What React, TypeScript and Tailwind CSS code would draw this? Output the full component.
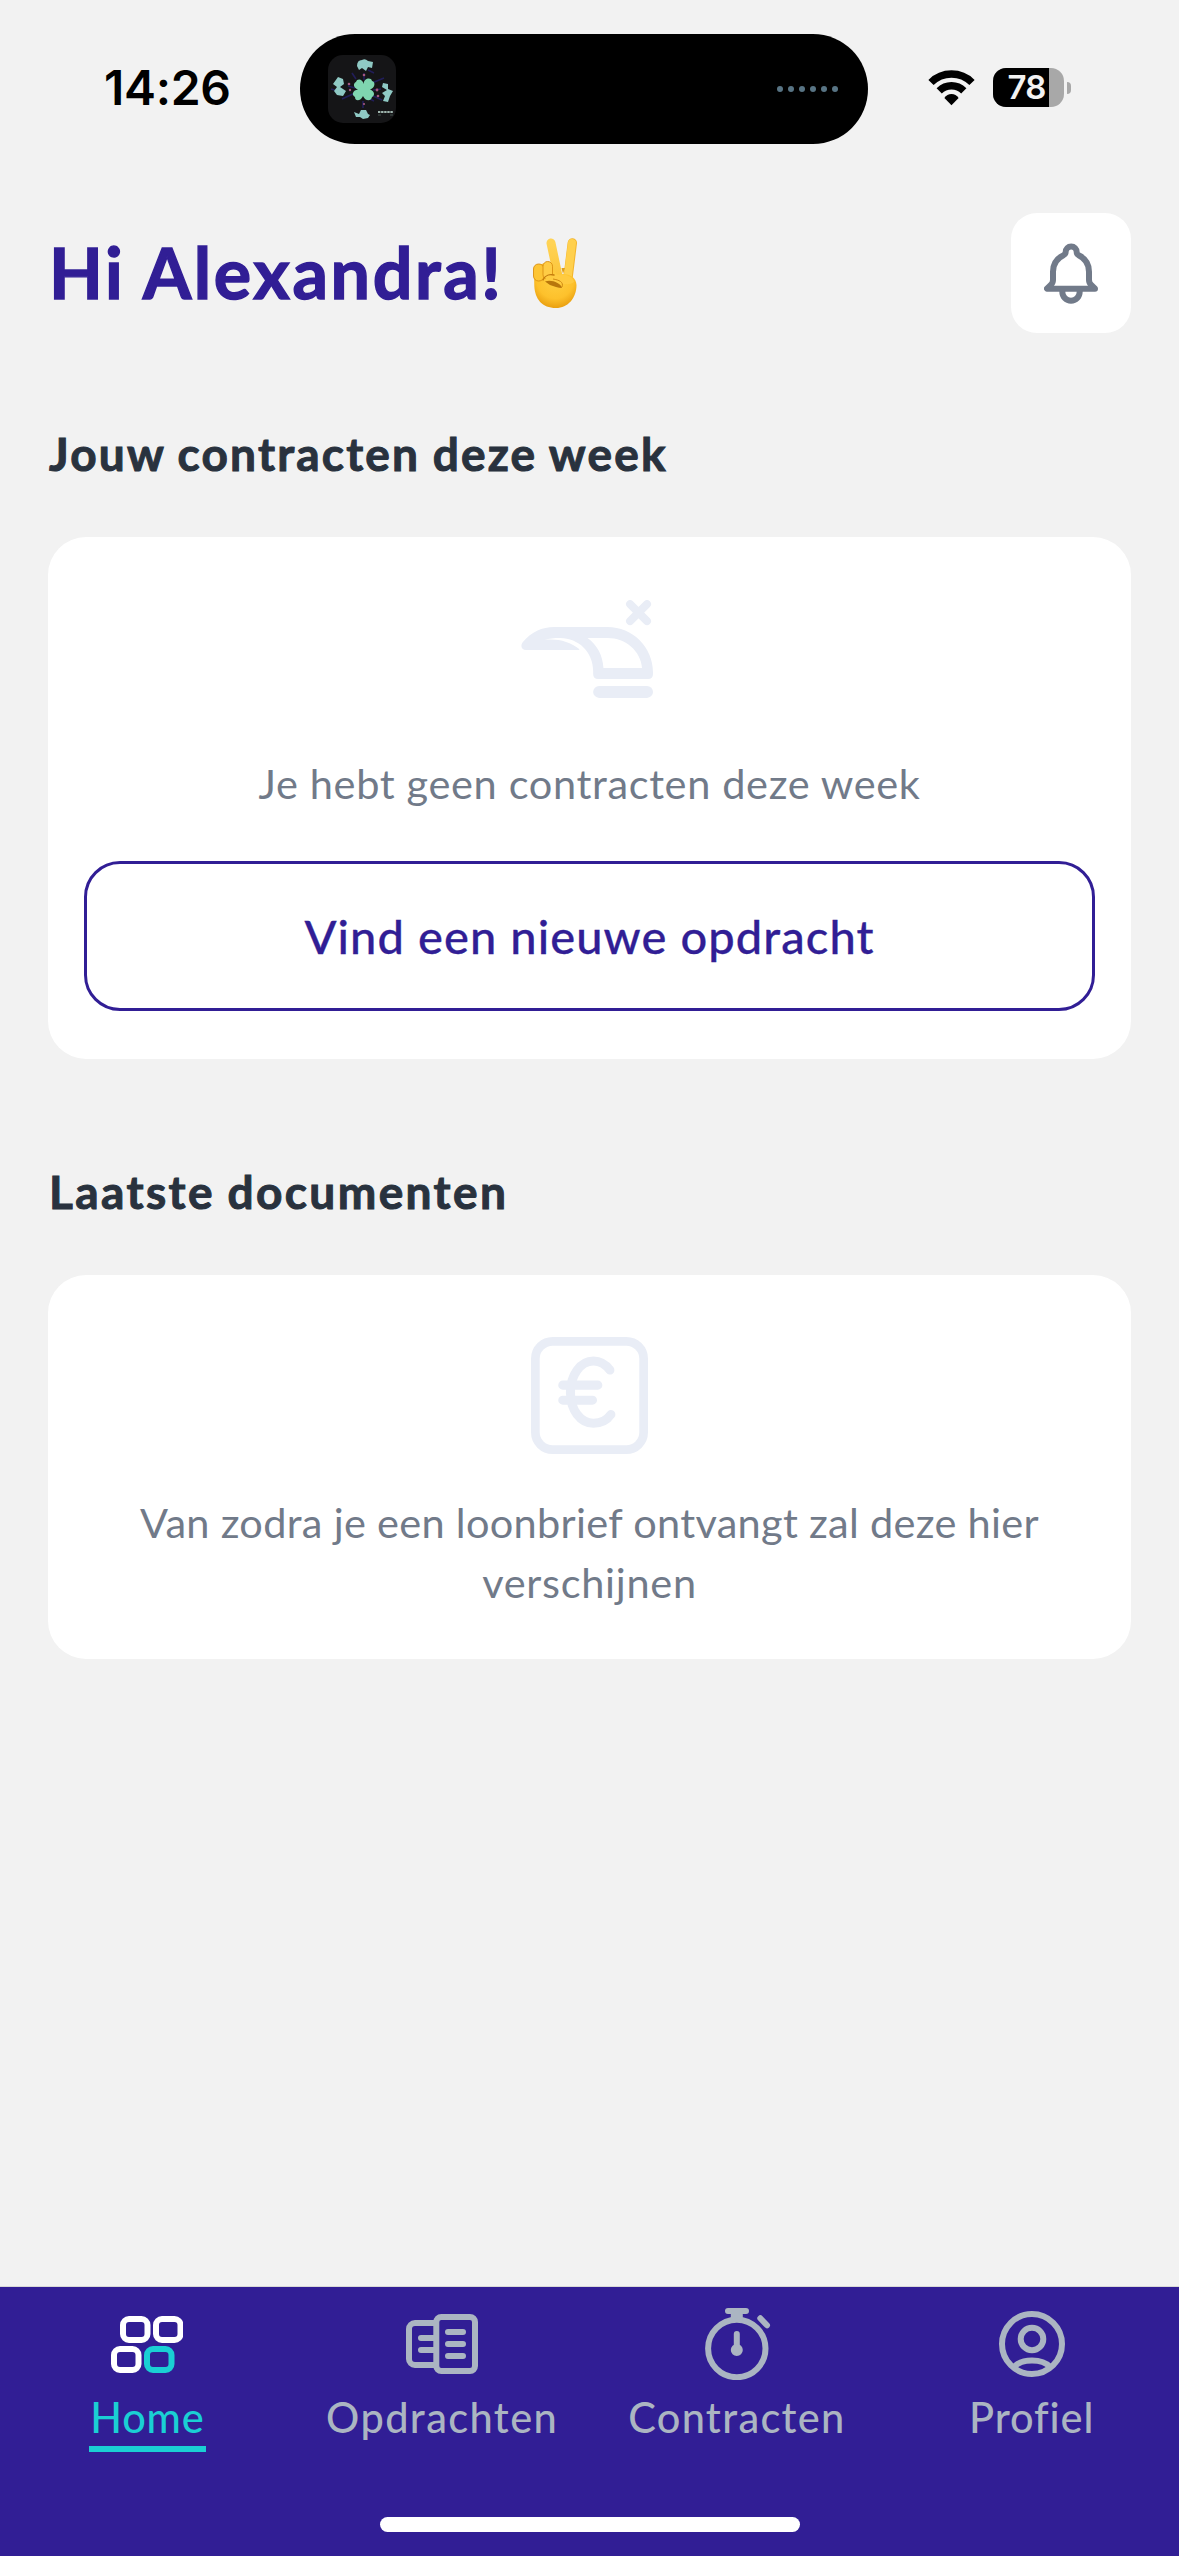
import React from "react";

const WifiIcon = () => (
  <svg width="47" height="36" viewBox="0 0 47 36" fill="none" stroke="#000" strokeWidth="7.4">
    <path d="M3 12.5A29 29 0 0 1 44 12.5" />
    <path d="M11.2 20.8A17.5 17.5 0 0 1 35.8 20.8" />
    <path d="M23.5 35.2L16.4 28Q19 24 23.5 24T30.6 28Z" fill="#000" stroke="none" />
  </svg>
);

const AlbumArt = () => (
  <svg width="68" height="68" viewBox="0 0 68 68">
    <rect width="68" height="68" rx="15" fill="#151517" />
    <g stroke="#25206a" strokeWidth="1.6" opacity="0.8">
      <path d="M36 18V25M35 46V53M20 31L27 33M45 35L53 34" />
      <path d="M44 28L56 23M45 41L54 45M14 44L27 38M28 24L24 18M46 46L42 44M3 34L10 36M46 18L40 15" />
    </g>
    <path
      d="M35.500 29C36 23 43 22 44 26C48 27 47 33 42 34.500C47 36 47 41 44 42C43 47 37 46 35 41C33 46 27 47 27 42C23 40 25 35 30 34.500C25 33 25 28 28 27C29 23 35 24 35.500 29Z"
      fill="#7fd6b0"
    />
    <g fill="#8fc9c4">
      <path d="M29 11Q29 5 34 5Q37 3 40 6L45 7L44 13L40 12L38 16L34 13L31 15Z" />
      <path d="M10 22L15 24L16 29L12 32L18 36L15 41L9 40L6 36L9 32L5 29Z" />
      <path d="M55 28L60 29L60 34L65 36L62 41L60 47L55 46L57 41L54 38L59 35L54 32Z" />
      <path d="M26 57L31 59L33 55L38 55L40 59L42 60L40 63L35 64L32 62L28 62Z" />
    </g>
    <g fill="#a4567e">
      <circle cx="36" cy="20" r="1.3" />
      <circle cx="21" cy="29" r="1.3" />
      <circle cx="22" cy="35" r="1.2" />
      <circle cx="49" cy="35" r="1.4" />
      <circle cx="50" cy="41" r="1.3" />
      <circle cx="36" cy="49" r="1.1" />
    </g>
    <path d="M50 57H65" stroke="#9fb5ae" strokeWidth="2.2" strokeDasharray="2.4 .7" />
    <path d="M50 60H53M62 60H65" stroke="#44524e" strokeWidth="1" />
  </svg>
);

const VictoryHand = () => (
  <svg className="mt-[3px]" width="44" height="71" viewBox="0 0 44 71" role="img" aria-label="victory hand">
    <defs>
      <linearGradient id="finger" x1="0" y1="0" x2="0" y2="1">
        <stop offset="0" stopColor="#ffd355" />
        <stop offset="1" stopColor="#fcc53a" />
      </linearGradient>
      <radialGradient id="palm" cx="0.5" cy="0.35" r="0.68">
        <stop offset="0" stopColor="#ffcf42" />
        <stop offset="0.65" stopColor="#fdc12c" />
        <stop offset="1" stopColor="#e79b0c" />
      </radialGradient>
    </defs>
    <path d="M18 5L25 38" stroke="url(#finger)" strokeWidth="9" strokeLinecap="round" />
    <path d="M39.3 5L35 40" stroke="#f3b52c" strokeWidth="9.4" strokeLinecap="round" />
    <path d="M39 5L34.6 40" stroke="#ffd04d" strokeWidth="8" strokeLinecap="round" />
    <path
      d="M1 34C3 28 10 24 17 25L24 37C34 34 43 38 43.5 47C43.5 60 35 70 23 70C9 70 2 61 1.3 48Z"
      fill="url(#palm)"
    />
    <rect x="0.5" y="26" width="10.5" height="17" rx="5" fill="#fdc535" stroke="#d98f12" strokeWidth="0.9" />
    <rect x="10" y="23.5" width="9.5" height="18" rx="4.7" fill="#ffcc45" stroke="#d98f12" strokeWidth="0.9" />
    <path d="M12 42C14 37 20 35.5 26 37C34 36 40 39 41 44C36 48 32 45 28.5 46.5" fill="#ffcb40" />
    <path d="M10 42C12 37 17 36 21 37" fill="none" stroke="#c37a0c" strokeWidth="1.3" strokeLinecap="round" />
    <path d="M12 43.5C18 41 28 45 29 50C25 50 21 48 17 47" fill="#b8760c" />
    <path d="M29 49C31 44 26 42 20 41" fill="none" stroke="#d08a12" strokeWidth="1" />
    <path d="M28.5 30L30 36L32 30" fill="#e0a01c" />
  </svg>
);

const BellIcon = () => (
  <svg
    width="54"
    height="61"
    viewBox="192 157 162 183"
    fill="none"
    stroke="#717a89"
    strokeWidth="18"
    strokeLinecap="round"
    strokeLinejoin="round"
  >
    <path d="M257 184C257 189 254 192 250 194C229 204 219 222 219 243V268C219 275 216 280 211 284L201 294H345L335 284C330 280 327 275 327 268V243C327 222 317 204 296 194C292 192 290 189 290 184A16.5 16.5 0 0 0 257 184Z" />
    <path d="M247 298V304A26 26 0 0 0 299 304V298" strokeLinecap="butt" />
  </svg>
);

const HelmetIcon = () => (
  <svg className="mr-[5px]" width="132" height="98" viewBox="122 90 397 294" fill="#e9edf6">
    <path
      fillRule="evenodd"
      d="M127 217C152 186 186 171 222 171H382C458 171 519 232 519 308V312Q519 327 504 327H354Q339 327 339 312V303C339 247 295 204 240 204C222 204 206 206 192 210C230 205 268 214 298 238L296 240H137C124 240 119 227 127 217ZM322 204H382C438 204 482 244 486 294H370C368 258 352 225 322 204Z"
    />
    <rect x="339" y="348" width="180" height="36" rx="18" />
    <path d="M450 102L501 153M501 102L450 153" stroke="#e9edf6" strokeWidth="24" strokeLinecap="round" />
  </svg>
);

const EuroIcon = () => (
  <svg
    width="117"
    height="117"
    viewBox="95 80 350 350"
    fill="none"
    stroke="#e9edf6"
    strokeWidth="27"
    strokeLinecap="round"
  >
    <rect x="108" y="93" width="324" height="324" rx="52" strokeWidth="26" />
    <path d="M331 179C318 162 302 152 282 152C242 152 213 195 213 246C213 297 242 338 282 338C306 338 323 328 334 312" />
    <path d="M190 224H295M190 269H279" />
  </svg>
);

const HomeIcon = () => (
  <>
    <rect x="12" y="11" width="24.5" height="21" rx="6" stroke="#fff" />
    <rect x="45" y="11" width="24.5" height="21" rx="6" stroke="#fff" />
    <rect x="3" y="41" width="24.5" height="21" rx="6" stroke="#fff" />
    <rect x="36" y="41" width="24.5" height="21" rx="6" />
  </>
);

const JobsIcon = () => (
  <>
    <rect x="30.3" y="9" width="38.7" height="54" rx="5" />
    <path d="M30 15H9A6 6 0 0 0 3 21V51A6 6 0 0 0 9 57H30" />
    <path d="M15 30H30M15 42H30M42 24H57M42 36H57M42 48H57" />
  </>
);

const ContractsIcon = () => (
  <>
    <circle cx="35.8" cy="40.5" r="28.7" />
    <path d="M27 3H45M35.8 26V40M59.3 10.3L66 17.3" />
    <path d="M35.8 4V13" strokeWidth="12" strokeLinecap="butt" />
    <circle cx="35.8" cy="42" r="3" />
  </>
);

const ProfileIcon = () => (
  <>
    <circle cx="36" cy="36" r="30" />
    <circle cx="36" cy="31" r="11.3" />
    <path d="M18 59C22 54.5 28 52.5 36 52.5S50 54.5 54 59" />
  </>
);

const tabs = [
  { label: "Home", icon: <HomeIcon />, active: true, spacing: "tracking-[0.8px]" },
  { label: "Opdrachten", icon: <JobsIcon />, active: false, spacing: "tracking-[1.4px]" },
  { label: "Contracten", icon: <ContractsIcon />, active: false, spacing: "tracking-[1.3px]" },
  { label: "Profiel", icon: <ProfileIcon />, active: false, spacing: "tracking-[0.9px]" },
];

const StatusBar = () => (
  <div className="flex h-[213px] shrink-0 items-start pt-[34px] font-['Inter',sans-serif]">
    <div className="flex h-[108px] w-[300px] items-center pl-[104px] text-[48px] font-semibold tracking-[-0.3px]">
      14:26
    </div>
    <div className="flex h-[110px] w-[568px] items-center justify-between rounded-full bg-black pr-[30px] pl-[28px]">
      <AlbumArt />
      <div className="flex gap-[5px]">
        {[0, 1, 2, 3, 4, 5].map((dot) => (
          <span key={dot} className="size-[6px] rounded-full bg-[#587484]" />
        ))}
      </div>
    </div>
    <div className="flex h-[107px] items-center pl-[60px]">
      <WifiIcon />
      <div className="ml-[18px] flex h-[39px] w-[71px] items-center overflow-hidden rounded-[13px] bg-[#a8a8a8]">
        <div className="flex h-full w-[56px] items-center justify-center bg-black pl-[11px] text-[33px] font-semibold tracking-[-0.8px] text-[#f2f2f2]">
          78
        </div>
      </div>
      <div className="ml-[3px] h-[12px] w-[4px] rounded-r-full bg-[#a8a8a8]" />
    </div>
  </div>
);

const App = () => {
  return (
    <div className="flex h-[2556px] w-[1179px] flex-col overflow-hidden bg-[#f2f2f2] font-['Lato',sans-serif]">
      <StatusBar />

      <main className="flex flex-1 flex-col px-12">
        <header className="flex h-[120px] items-center justify-between">
          <h1 className="flex items-center gap-[29px] pb-[3px] pl-px text-[70px] leading-[84px] font-bold tracking-[2.6px] whitespace-nowrap text-[#311e95] [-webkit-text-stroke:1.4px]">
            Hi Alexandra!
            <VictoryHand />
          </h1>
          <button className="flex size-[120px] items-center justify-center rounded-[26px] bg-white">
            <BellIcon />
          </button>
        </header>

        <h2 className="mt-[91px] h-[60px] pl-px text-[46px] leading-[60px] font-bold tracking-[2.2px] [word-spacing:-1px] whitespace-nowrap text-[#29323e] [-webkit-text-stroke:1px]">
          Jouw contracten deze week
        </h2>
        <section className="mt-[53px] flex h-[522px] flex-col items-center rounded-[38px] bg-white px-9 pt-[63px]">
          <HelmetIcon />
          <p className="mt-[55px] h-[60px] text-[41.5px] leading-[60px] tracking-[0.65px] whitespace-nowrap text-[#717a89]">
            Je hebt geen contracten deze week
          </p>
          <button className="mt-[48px] h-[150px] w-full rounded-[36px] border-[3px] border-[#311e95] text-[47px] font-medium tracking-[1.1px] text-[#311e95] [-webkit-text-stroke:0.3px]">
            Vind een nieuwe opdracht
          </button>
        </section>

        <h2 className="mt-[103px] h-[60px] pl-px text-[46px] leading-[60px] font-bold tracking-[2.4px] [word-spacing:-1px] whitespace-nowrap text-[#29323e] [-webkit-text-stroke:1px]">
          Laatste documenten
        </h2>
        <section className="mt-[53px] flex h-[384px] flex-col items-center rounded-[38px] bg-white pt-[62px]">
          <EuroIcon />
          <p className="mt-[38px] text-center text-[41.5px] leading-[60px] tracking-[0.3px] whitespace-nowrap text-[#717a89]">
            Van zodra je een loonbrief ontvangt zal deze hier
            <br />
            <span className="tracking-[0.7px]">verschijnen</span>
          </p>
        </section>
      </main>

      <nav className="flex h-[270px] shrink-0 flex-col border-t border-[#d8d8d8] bg-[#311e95]">
        <div className="grid grid-cols-4 pt-[21px]">
          {tabs.map((tab) => (
            <a
              key={tab.label}
              className={
                tab.active
                  ? "flex flex-col items-center text-[#1acfd4]"
                  : "flex flex-col items-center text-[#abb5c2]"
              }
            >
              <svg
                width="72"
                height="72"
                viewBox="0 0 72 72"
                fill="none"
                stroke="currentColor"
                strokeWidth="6"
                strokeLinecap="round"
              >
                {tab.icon}
              </svg>
              <span
                className={`mt-[7px] h-[59px] text-[41.5px] leading-[60px] font-medium whitespace-nowrap ${tab.spacing}`}
              >
                {tab.label}
              </span>
              {tab.active && <span className="h-[6px] w-[117px] bg-[#1acfd4]" />}
            </a>
          ))}
        </div>
        <div className="mt-auto mb-6 h-[15px] w-[420px] self-center rounded-full bg-white" />
      </nav>
    </div>
  );
};

export default App;
